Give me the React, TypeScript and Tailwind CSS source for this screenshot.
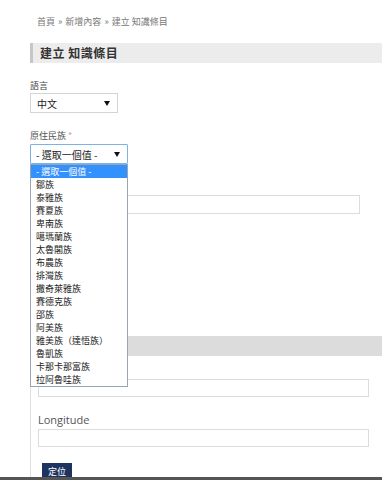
const cjk = '"Noto Sans CJK TC", "Noto Sans", sans-serif';

const tribes = [
  '鄒族',
  '泰雅族',
  '賽夏族',
  '卑南族',
  '噶瑪蘭族',
  '太魯閣族',
  '布農族',
  '排灣族',
  '撒奇萊雅族',
  '賽德克族',
  '邵族',
  '阿美族',
  '雅美族（達悟族）',
  '魯凱族',
  '卡那卡那富族',
  '拉阿魯哇族',
];

function Arrow() {
  return (
    <svg width="6" height="5" viewBox="0 0 6 5" className="shrink-0">
      <path d="M0 0h6L3 5z" fill="#111" />
    </svg>
  );
}

export default function App() {
  return (
    <div className="relative w-[382px] h-[480px] overflow-hidden bg-white text-[#333]" style={{ fontFamily: cjk }}>
      {/* breadcrumb */}
      <div className="pt-[16px] pl-[37px] text-[9px] leading-[12px] text-[#777]">
        首頁 <span className="mx-[1px]">»</span> 新增內容 <span className="mx-[1px]">»</span> 建立 知識條目
      </div>

      {/* title */}
      <div className="mt-[15px] ml-[30px] h-[20px] flex items-center bg-[#ececec] border-l-[3px] border-[#c6c6c6] pl-[7px]">
        <h1 className="text-[12px] font-bold text-[#333] tracking-[0.5px]">建立 知識條目</h1>
      </div>

      <div className="pl-[30px]">
        {/* language */}
        <div className="mt-[17px] text-[9px] leading-[12px] text-[#444]">語言</div>
        <div className="mt-[1px] w-[88px] h-[20px] border border-[#d4d4d4] flex items-center justify-between pl-[6px] pr-[7px] text-[10px] text-[#222]">
          <span>中文</span>
          <Arrow />
        </div>

        {/* tribe */}
        <div className="mt-[17px] text-[9px] leading-[12px] text-[#555]">
          原住民族 <span className="text-[#c9a0a0]">*</span>
        </div>
        <div className="relative mt-[2px] w-[98px]">
          <div className="h-[20px] border border-[#7db2e8] rounded-[1px] flex items-center justify-between pl-[5px] pr-[7px] text-[10px] text-[#222]">
            <span>- 選取一個值 -</span>
            <Arrow />
          </div>
          <div className="absolute left-0 top-[20px] z-10 w-[98px] bg-white border border-[#9aa5b4] text-[9px] text-[#222]">
            <div className="h-[13px] leading-[13px] pl-[5px] bg-[#3390ff] text-white">- 選取一個值 -</div>
            {tribes.map((t) => (
              <div key={t} className="h-[13px] leading-[13px] pl-[5px] whitespace-nowrap">
                {t}
              </div>
            ))}
          </div>
        </div>

        {/* field hidden behind the list */}
        <div className="mt-[31px] w-[330px] h-[19px] border border-[#dcdcdc]" />

        {/* fieldset */}
        <div className="mt-[122px] h-[20px] bg-[#dcdcdc]" />
        <div className="border-l border-[#dedede] pl-[7px] pb-[20px]">
          <div className="pt-[23px]">
            <div className="w-[331px] h-[18px] border border-[#dcdcdc]" />
          </div>
          <div className="mt-[16px] text-[11px] leading-[14px] text-[#555]" style={{ fontFamily: '"Open Sans", sans-serif' }}>
            Longitude
          </div>
          <div className="mt-[2px] w-[331px] h-[18px] border border-[#dcdcdc]" />
          <button className="mt-[16px] ml-[4px] w-[30px] h-[18px] bg-[#1d3461] text-white text-[9px] leading-[18px]">定位</button>
        </div>
      </div>

      <div className="absolute left-0 bottom-0 w-full h-[3px] bg-[#555]" />
    </div>
  );
}
